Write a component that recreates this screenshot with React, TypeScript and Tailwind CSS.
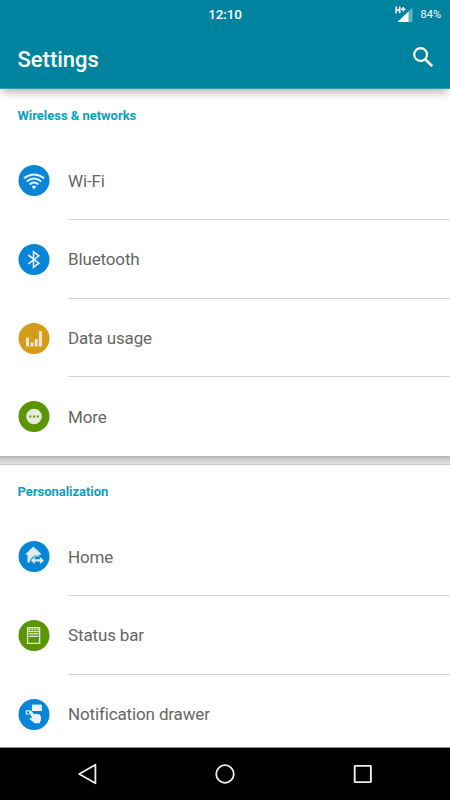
import type { ReactNode } from 'react'
import clsx from 'clsx'

interface SettingItem {
  label: string
  color: string
  icon: ReactNode
}

interface SettingsSectionProps {
  title: string
  items: SettingItem[]
}

const BLUE = 'fill-[#0786d8]'
const AMBER = 'fill-[#d59b1a]'
const GREEN = 'fill-[#5a9503]'

// Glyphs are drawn on the same 31x31 grid as the circle behind them
const WifiGlyph = () => (
  <g fill="none" stroke="#e8eef2" strokeWidth="1.9">
    <path d="M5.3 13.3Q15.5 5.6 25.7 13.3" />
    <path d="M8.2 16.4Q15.5 10.6 22.8 16.4" />
    <path d="M11 19.4Q15.5 15.6 20 19.4" />
    <path d="M13.2 21.4Q15.5 19.5 17.8 21.4L15.5 24.6Z" fill="#e8eef2" stroke="none" />
  </g>
)

const BluetoothGlyph = () => (
  <path
    d="M9.9 11L20.3 19.2L15 23.3V7.9L20.3 11.8L9.9 19.8"
    fill="none"
    stroke="#e8eef2"
    strokeWidth="1.6"
  />
)

const DataGlyph = () => (
  <path d="M7.5 14.5h3v9h-3zM12 19.5h3v4h-3zM16.3 16h2.8v7.5h-2.8zM20.4 8.3h3v15.2h-3z" fill="#f1ead8" />
)

const MoreGlyph = () => (
  <g>
    <circle cx="15.5" cy="15.5" r="7.8" fill="#e6ebdd" />
    <path d="M10.8 14.5h2v2h-2zM14.5 14.5h2v2h-2zM18.2 14.5h2v2h-2z" fill="#5a9503" />
  </g>
)

const HomeGlyph = () => (
  <g>
    <path d="M14.9 5.4L23.4 13.6H21V15.8H15.6L11.4 19.4V21.4H9V13.6H6.6Z" fill="#e2ebf2" />
    <path
      d="M12.4 19.4L16.4 15.8V18.3H21.4V15.8L25.4 19.4L21.4 23V20.5H16.4V23Z"
      fill="#e2ebf2"
    />
    <path d="M12.2 18L15.8 14.9H22" fill="none" stroke="#0786d8" strokeWidth="0.7" />
  </g>
)

const StatusBarGlyph = () => (
  <g>
    <path d="M9.1 7.8h12v15.6h-12z" fill="none" stroke="#e0e7d5" strokeWidth="1.4" />
    <path d="M9.1 11.6h12" stroke="#e0e7d5" strokeWidth="1.1" />
    <path d="M10.2 9.7h10" stroke="#e0e7d5" strokeWidth="1.7" strokeDasharray="1.7 1.1" />
    <path d="M10.4 13.8h9.5M10.4 16.4h9.5" stroke="#e0e7d5" strokeWidth="1.3" />
  </g>
)

const DrawerGlyph = () => (
  <g>
    <path d="M13.4 5.6h10v6.4h-10z" fill="#edf2f6" />
    <path d="M12 11.8H7.9V15H11" fill="none" stroke="#e2ebf2" strokeWidth="1.2" />
    <path
      d="M11.1 12.2Q12.2 11.3 13.2 12.4L15.9 15.6L16.7 14.7L17.8 15.3L18.8 14.7L20 15.5L21 15.2L22.4 17.3V20.8L21.3 24.2H16.2L11 20Q11.4 18.2 13.4 19L14 19.3L10.7 13.8Z"
      fill="#edf2f6"
    />
  </g>
)

const wirelessItems: SettingItem[] = [
  { label: 'Wi-Fi', color: BLUE, icon: <WifiGlyph /> },
  { label: 'Bluetooth', color: BLUE, icon: <BluetoothGlyph /> },
  { label: 'Data usage', color: AMBER, icon: <DataGlyph /> },
  { label: 'More', color: GREEN, icon: <MoreGlyph /> },
]

const personalizationItems: SettingItem[] = [
  { label: 'Home', color: BLUE, icon: <HomeGlyph /> },
  { label: 'Status bar', color: GREEN, icon: <StatusBarGlyph /> },
  { label: 'Notification drawer', color: BLUE, icon: <DrawerGlyph /> },
]

function SettingsSection({ title, items }: SettingsSectionProps) {
  return (
    <section className="bg-white">
      <h2 className="flex h-[52px] items-center pt-0.5 pl-[17.5px] text-[13px] font-bold tracking-[-0.03px] text-[#0a9fbd]">
        {title}
      </h2>
      {items.map((item, index) => (
        <div key={item.label} className="flex h-[78.75px] pl-[18px]">
          <svg viewBox="-0.5 0 32 31" className="mt-[24px] mr-[18px] h-[31px] w-8 shrink-0">
            <circle cx="15.5" cy="15.5" r="15.5" className={item.color} />
            {item.icon}
          </svg>
          <div
            className={clsx(
              'flex flex-1 items-center border-b pt-[3px] text-[17px] tracking-[-0.14px] text-[#666]',
              index < items.length - 1 ? 'border-[#d6d6d6]' : 'border-transparent'
            )}
          >
            {item.label}
          </div>
        </div>
      ))}
    </section>
  )
}

function StatusBar() {
  return (
    <div className="grid h-7 grid-cols-3 items-center text-white">
      <span className="col-start-2 pt-px text-center text-[13.5px] font-medium tracking-[-0.2px]">12:10</span>
      <div className="flex items-center justify-end gap-2 pr-[9px]">
        <svg viewBox="0 0 18 17" className="h-[17px] w-[18px]">
          <path d="M17.5 1.5V16H2.5Z" fill="#63b1c3" />
          <path d="M13.5 5.4V16H2.5Z" fill="#fff" />
          <path d="M0 0h10v7.5H0z" fill="#00839e" />
          <path d="M1.2 .5v6.8M4.7 .5v6.8M1.2 3.9h3.5M6 3.2h4.6M8.3 .9v4.6" stroke="#fff" strokeWidth="1.6" fill="none" />
        </svg>
        <span className="pt-0.5 text-[11px]">84%</span>
      </div>
    </div>
  )
}

function NavigationBar() {
  return (
    <nav className="flex h-[53px] shrink-0 items-center justify-between border-t border-[#888] bg-black px-[76px]">
      <svg viewBox="0 0 22 22" className="size-[22px]" fill="none" stroke="#eee" strokeWidth="1.8" strokeLinejoin="round">
        <path d="M3.2 11L19.4 1.7V20.3Z" />
      </svg>
      <svg viewBox="0 0 22 22" className="size-[22px]" fill="none" stroke="#eee" strokeWidth="1.8">
        <circle cx="11" cy="11" r="8.8" />
      </svg>
      <svg viewBox="0 0 22 22" className="size-[22px]" fill="none" stroke="#eee" strokeWidth="1.9">
        <rect x="2.7" y="2.9" width="16.2" height="16.2" rx="0.5" />
      </svg>
    </nav>
  )
}

export default function App() {
  return (
    <div className="flex h-[800px] w-[450px] flex-col overflow-hidden bg-white font-['Roboto',sans-serif]">
      <header className="relative z-10 h-[89px] shrink-0 border-b border-[#3d9aad] bg-[#00839e] shadow-[0_5px_9px_-2px_rgba(0,0,0,0.32)]">
        <StatusBar />
        <div className="flex h-[61px] items-center justify-between pr-4 pl-[17.5px]">
          <h1 className="pt-0.5 text-[22px] font-medium text-white">Settings</h1>
          <svg viewBox="0 0 22 22" className="mb-[3px] size-[22px]" fill="none" stroke="#fff" strokeWidth="2.2">
            <circle cx="8.6" cy="8.5" r="6.4" />
            <path d="M13 13L20.2 20.2" strokeWidth="2.6" />
          </svg>
        </div>
      </header>

      <main className="min-h-0 flex-1 overflow-hidden">
        <SettingsSection title="Wireless & networks" items={wirelessItems} />
        <div className="h-[9px] border-b border-[#c9c9c9] bg-linear-to-b from-[#b5b5b5] via-[#d3d3d3] to-[#e0e0e0]" />
        <SettingsSection title="Personalization" items={personalizationItems} />
      </main>

      <NavigationBar />
    </div>
  )
}
